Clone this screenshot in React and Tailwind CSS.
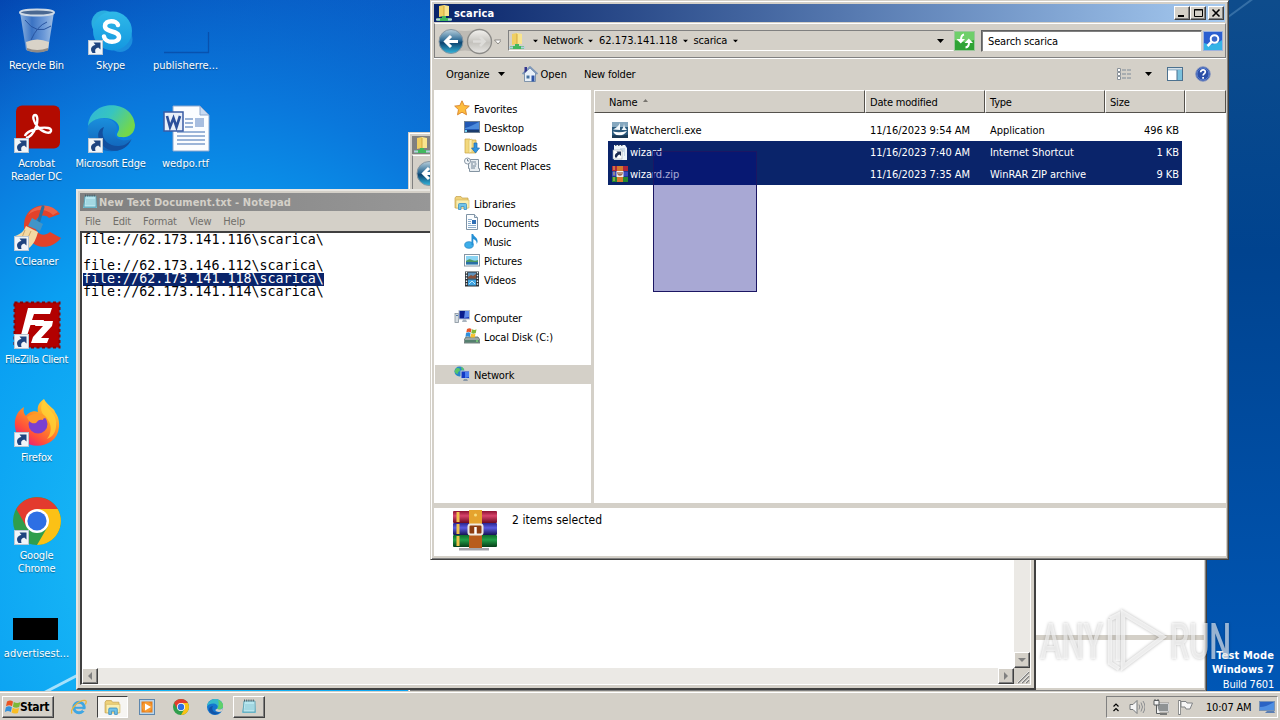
import React from "react";

const sideGroups = [
  {
    title: "Favorites",
    icon: "star",
    items: [
      { name: "Desktop", icon: "desktop" },
      { name: "Downloads", icon: "downloads" },
      { name: "Recent Places", icon: "recent" },
    ],
  },
  {
    title: "Libraries",
    icon: "library",
    items: [
      { name: "Documents", icon: "document" },
      { name: "Music", icon: "music" },
      { name: "Pictures", icon: "picture" },
      { name: "Videos", icon: "video" },
    ],
  },
  {
    title: "Computer",
    icon: "computer",
    items: [{ name: "Local Disk (C:)", icon: "disk" }],
  },
  { title: "Network", icon: "network", items: [], active: true },
];

const files = [
  { name: "Watchercli.exe", icon: "exe", date: "11/16/2023 9:54 AM", type: "Application", size: "496 KB" },
  { name: "wizard", icon: "link", date: "11/16/2023 7:40 AM", type: "Internet Shortcut", size: "1 KB", selected: true },
  { name: "wizard.zip", icon: "rar", date: "11/16/2023 7:35 AM", type: "WinRAR ZIP archive", size: "9 KB", selected: true },
];

const noteLines = [
  { text: "file://62.173.141.116\\scarica\\" },
  { text: "" },
  { text: "file://62.173.146.112\\scarica\\" },
  { text: "file://62.173.141.118\\scarica\\", selected: true },
  { text: "file://62.173.141.114\\scarica\\" },
];

const raised =
  "border border-t-white border-l-white border-r-[#404040] border-b-[#404040] shadow-[inset_-1px_-1px_0_#808080]";

/* ---------- small 16px icons ---------- */

const smallIcons = {
  star: (
    <path d="M8 .8l2.200 4.700 5.100.6-3.800 3.500 1 5.200L8 12.200l-4.500 2.600 1-5.200L.7 6.100l5.100-.6z" fill="#fdbd3e" stroke="#d8822a" strokeWidth=".9" />
  ),
  desktop: (
    <>
      <rect x=".5" y="2.500" width="15" height="11" fill="#2259b5" stroke="#6f8296" />
      <path d="M1 9c5-1 9-4 14-6v7H1z" fill="#4b8bdc" />
      <path d="M1 11h14v2H1z" fill="#1b3c6d" />
      <path d="M1 11h2v2H1z" fill="#6fd0f5" />
    </>
  ),
  showDesktop: (
    <>
      <rect x=".5" y="2.500" width="15" height="9" fill="#2a63c4" stroke="#7892b4" />
      <path d="M1 8c5 0 9-2 14-5v8H1z" fill="#4f8fe2" />
      <path d="M8 12h7l1 2H6z" fill="#5b7fb4" />
    </>
  ),
  downloads: (
    <>
      <path d="M1 1h5l1 1h5v13H1z" fill="#f3d97e" stroke="#c9a343" strokeWidth=".7" />
      <path d="M5 2l3-1v13l-3 1z" fill="#fbf0b5" stroke="#d3b558" strokeWidth=".5" />
      <path d="M10 5h3v5h2.500l-4 5-4-5H10z" fill="#2f94e0" stroke="#1e6bb0" strokeWidth=".7" />
    </>
  ),
  recent: (
    <>
      <path d="M4.500 2.500h10v9h1v3h-10v-3h-1z" fill="#e9eef2" stroke="#8494a2" />
      <path d="M7 5h5M7 7h2M10.500 7h2M7 9h5M7 11h4" stroke="#6e8294" />
      <circle cx="3.500" cy="4" r="3" fill="#f4f8fb" stroke="#8b98a6" />
      <path d="M3.500 2v2h1.500" stroke="#53687c" fill="none" strokeWidth=".8" />
    </>
  ),
  library: (
    <>
      <path d="M1 3l1-1.500h5l1 1.500h6v10H1z" fill="#efd27a" stroke="#c4a14b" strokeWidth=".7" />
      <path d="M2 5h13v8H2z" fill="#faeeb0" stroke="#d2b45a" strokeWidth=".6" />
      <path d="M4.500 14.500V9.500q0-1 1-1h6q1 0 1 1v5h-2.500v-3h-3v3z" fill="#70c3ea" stroke="#3b8fc0" strokeWidth=".8" />
    </>
  ),
  document: (
    <>
      <path d="M2.500.5h8l3 3v12h-11z" fill="#fbfdff" stroke="#7f93a5" />
      <path d="M10.500.5v3h3" fill="#dce8f2" stroke="#7f93a5" />
      <path d="M4 5.500h4M4 7.500h3M4 9.500h3M4 11.500h8M4 13.500h8" stroke="#8badcb" />
      <rect x="8" y="6" width="4" height="4" fill="#2f6fb4" />
    </>
  ),
  music: (
    <>
      <ellipse cx="5" cy="12" rx="4.300" ry="3.300" fill="#3daee9" stroke="#1f7fc0" strokeWidth=".7" />
      <path d="M7.500 1h1.700c.4 2.600 4.600 3.400 4.400 7.600-.1 1-.6 2-1 2.400.4-3-1.300-4-3.300-5V12H7.500z" fill="#2590d5" />
    </>
  ),
  picture: (
    <>
      <rect x=".5" y="2.500" width="15" height="11.500" fill="#fff" stroke="#8796a4" />
      <rect x="2" y="4" width="12" height="8.500" fill="#8ad4f3" />
      <path d="M2 9c3-2 4-2 6-1s4 1 6 0v2H2z" fill="#4f9963" />
      <path d="M2 10h12v2.500H2z" fill="#2a6fa6" />
    </>
  ),
  video: (
    <>
      <rect x="1" y=".5" width="14" height="15" fill="#2b3137" />
      <path d="M2.500 1v14M13.500 1v14" stroke="#eef3f6" strokeWidth="1.400" strokeDasharray="1.500 1.300" />
      <rect x="4" y="1.500" width="8" height="6" fill="#5f93bd" />
      <path d="M4 6l3-2 2 1 3-2v4.500H4z" fill="#8a5038" />
      <rect x="4" y="8.500" width="8" height="6" fill="#3fa4e2" />
      <path d="M5 13l3-3 3 3" stroke="#bfe5f8" fill="none" />
    </>
  ),
  computer: (
    <>
      <rect x="1" y="4.500" width="3.500" height="9" fill="#d5dce2" stroke="#85919c" strokeWidth=".8" />
      <path d="M2 6.500h2" stroke="#4b77a5" />
      <rect x="5" y="1.500" width="10.500" height="8.500" fill="#1533b5" stroke="#b4bfca" />
      <path d="M6 2h5v7H6z" fill="#0a1e8d" />
      <path d="M11 2h4v6l-5 1z" fill="#5e8bea" />
      <path d="M9 10.500h3l1 2.500H8z" fill="#a9b4bf" />
    </>
  ),
  disk: (
    <>
      <path d="M2 9h12l2 3v3H0v-3z" fill="#9aa7a5" stroke="#596866" strokeWidth=".8" />
      <path d="M1 12h14v2.500H1z" fill="#55806f" />
      <path d="M12 13h2" stroke="#8fff7a" />
      <path d="M3 1c2-1 3-1 4.500 0L6.800 4.500C5 3.500 4 3.500 2.300 4.500z" fill="#e8552a" />
      <path d="M8 1.200c2 1 3 1 4.500 0L11.800 5c-2 1-3 .7-4.500 0z" fill="#83b936" />
      <path d="M2 5c2-1 3-1 4.500 0L6 9C4 8 3 8 1.500 9z" fill="#2f8fdb" />
      <path d="M7 5.400c2 1 3 1 4.500 0L10.800 9.500H6.500z" fill="#f8c12e" />
    </>
  ),
  network: (
    <>
      <circle cx="5.500" cy="5.500" r="5" fill="#2686c9" />
      <path d="M2 2.500c3-1 4 0 4 1.500S3 6 4 8c-2 0-3-1-3.500-3zM7 1c2 0 3 2 3 3L8 5z" fill="#56c56a" />
      <rect x="7" y="5" width="8.500" height="7.500" fill="#1338c4" stroke="#c3ccd6" />
      <path d="M11 6h4v5l-4 1z" fill="#4c7df0" />
      <path d="M10 13h3l1 2H9z" fill="#8998a8" />
    </>
  ),
  exe: (
    <>
      <rect width="16" height="16" fill="#2d5b7d" />
      <path d="M0 0h16v5H0z" fill="#86a8bf" />
      <path d="M8 1C7 4 4 6 1 7.500l7 .5zM12 1c0 3-1 5-2.500 7H15c-2-2-3-4-3-7z" fill="#f2f8fb" />
      <path d="M1 9.500c4 1 9 1 14-.5-2 3-5 4.500-8 4.500s-5-2-6-4z" fill="#fff" />
      <path d="M0 13.500c4-1 9 1 16-1V16H0z" fill="#1b3954" />
    </>
  ),
  link: (
    <>
      <path d="M2 1h11l2 3v12H2z" fill="#eef4fa" />
      <path d="M3 1.500h9" stroke="#53606c" strokeDasharray="1.500 1.500" />
      <path d="M8 5h5M10 7h3M12 9h1M12 11h1" stroke="#a8bfd4" />
      <rect x="1" y="6" width="9" height="9" fill="#fff" stroke="#9aa5b0" strokeWidth=".6" />
      <path d="M3 13.500c-.5-3 .5-4.500 2.500-4.800L4.500 7.500H9V12L7.500 10.500C6 11 5.200 12 5 13.500z" fill="#1c2c50" />
    </>
  ),
  rar: (
    <>
      <rect width="16" height="5" fill="#b0263a" />
      <rect y="5.500" width="16" height="5" fill="#3a4bc0" />
      <rect y="11" width="16" height="5" fill="#26892f" />
      <path d="M2 0v16" stroke="#e7c25a" strokeDasharray="4 1.500" />
      <rect x="5" width="6" height="16" fill="#d8792c" />
      <rect x="4.500" y="5" width="7" height="6" fill="#eee" />
      <path d="M6 6v2q0 1 1 1h2q1 0 1-1V6M8 6v3" stroke="#813b1b" fill="none" />
    </>
  ),
  folderNet: (
    <>
      <path d="M3 1l5-1v11l-5 1z" fill="#f0cf62" />
      <path d="M8 0l5 1v10H8z" fill="#f9e58e" />
      <path d="M8 1v10" stroke="#c99c35" strokeWidth=".8" />
      <path d="M6 11h4v2h5v3H1v-3h5z" fill="#42b85e" />
      <path d="M0 13.500h4v2H0zM12 13.500h4v2h-4z" fill="#b6cfe0" />
    </>
  ),
  notepad: (
    <>
      <path d="M3 2h11l1 12H1z" fill="#76c3d6" />
      <path d="M3 2h11v11H2z" fill="#b7e6ef" stroke="#4d93a7" strokeWidth=".7" />
      <path d="M4 6h9M4 8h9M3.500 10H13" stroke="#7fbccb" strokeWidth=".7" />
      <path d="M3 1.500h11" stroke="#4b5f68" strokeWidth="2" strokeDasharray="1 1.200" />
    </>
  ),
  openHouse: (
    <>
      <path d="M2.500 7v8.500h11V7L8 2z" fill="#e8f0f8" stroke="#68829e" strokeWidth=".8" />
      <path d="M.5 8L8 1l7.500 7" stroke="#7f98b9" strokeWidth="1.800" fill="none" />
      <path d="M2.500 1h2.500v3.500L2.500 7z" fill="#34358f" />
      <path d="M9.500 9.500h3v6h-3z" fill="#2e55a6" />
      <path d="M4.500 9.500h3v3h-3z" fill="#46729f" />
    </>
  ),
  views: (
    <>
      <path d="M1.500 2.500h3v3h-3zM1.500 6.500h3v3h-3zM1.500 10.500h3v3h-3z" fill="#fff" stroke="#8a929a" />
      <path d="M6 4h4M11 4h4M6 8h4M11 8h4M6 12h4M11 12h4" stroke="#7c8a98" />
    </>
  ),
  pane: (
    <>
      <rect x=".5" y="1.500" width="15" height="13" fill="#fff" stroke="#4c718f" />
      <path d="M1 3.500h14" stroke="#a6bfd1" strokeWidth="2" />
      <rect x="10" y="4" width="5" height="10" fill="#7bc1dc" />
      <path d="M10 4v10" stroke="#4c718f" />
    </>
  ),
  help: (
    <>
      <circle cx="8" cy="8" r="7.300" fill="#2c4fa8" stroke="#8c9ac0" />
      <circle cx="8" cy="8" r="6" fill="none" stroke="#6b8fdb" strokeWidth=".8" />
      <path d="M5.700 6.200C5.700 3 10.500 3.200 10.300 6c-.1 1.700-2.200 1.700-2.200 3.600M8.100 11v1.700" stroke="#fff" strokeWidth="1.700" fill="none" />
    </>
  ),
  ie: (
    <>
      <circle cx="8" cy="8.500" r="5.200" fill="none" stroke="#3ea6e3" strokeWidth="3" />
      <path d="M4 8.800h9" stroke="#3ea6e3" strokeWidth="2" />
      <path d="M11 10.200h5v1.800h-4z" fill="#d4d0c8" />
      <path d="M1 14.500C-1.500 11 7 1 14 1.300c2 .3 1.200 2.700.3 4.200" fill="none" stroke="#e9b53c" strokeWidth="1.300" />
    </>
  ),
  wmp: (
    <>
      <rect x=".5" y=".5" width="15" height="15" fill="#b9d5ec" stroke="#5d86ad" />
      <rect x="2.500" y="2.500" width="11" height="11" fill="#e8801c" />
      <circle cx="8" cy="8" r="5" fill="#f79a31" />
      <path d="M6 4.500l6 3.500-6 3.500z" fill="#fff" />
    </>
  ),
  chrome: (
    <>
      <circle cx="8" cy="8" r="8" fill="#2f9e4c" />
      <path d="M1.100 4A8 8 0 0 1 14.900 4H8L4.500 10z" fill="#e33b2e" />
      <path d="M14.900 4A8 8 0 0 1 8 16l3.500-6L8 4z" fill="#fbc116" />
      <circle cx="8" cy="8" r="4" fill="#fff" />
      <circle cx="8" cy="8" r="3.200" fill="#2d6fe4" />
    </>
  ),
  edge: (
    <>
      <circle cx="8" cy="8" r="8" fill="#1476cf" />
      <path d="M0 7.500C.6-1.500 15.500-3 16 7c.1 3.500-4.200 4-6 2.800C12 7 9.500 4.500 6.500 4.500 3.500 4.500 1 5.500 0 7.500z" fill="#35b9cb" />
      <path d="M11 1c4 1 5.500 4 5 7-.6 2.500-4.500 3-6 1.800C12 8 12 3 11 1z" fill="#5fd06b" />
      <path d="M6 7c-2.500 4 1.500 8 7 6-3 4-10 3-11-2C1.600 8.500 4 7 6 7z" fill="#1254a8" />
      <path d="M10 9.800c1.800 1.200 4 .9 6-.8l-.8 3c-2 1.500-6 1.300-7-1z" fill="#d4d0c8" />
    </>
  ),
  speaker: (
    <>
      <path d="M1 5.500h3L8 1.500v13l-4-4H1z" fill="#f5f5f5" stroke="#75787a" />
      <path d="M10 5.500q1.500 2.500 0 5M12 3.500q3 4.500 0 9M14 2q4 6 0 12" stroke="#8a8d90" fill="none" />
    </>
  ),
  netTray: (
    <>
      <rect x="4.500" y="4.500" width="11" height="8" fill="#8f9394" stroke="#fff" />
      <rect x="4" y="4" width="12" height="9" fill="none" stroke="#66696b" strokeWidth=".6" />
      <path d="M1 1.500h5v4.500H1zM2 0v2M5 0v2M3.500 6v8.500H7" fill="#f4f4f4" stroke="#595c5e" />
      <path d="M7 15h7" stroke="#595c5e" strokeWidth="1.500" />
    </>
  ),
  flag: (
    <>
      <path d="M2.500 1v15" stroke="#76797b" strokeWidth="2.400" />
      <path d="M2.500 2v13" stroke="#fff" />
      <path d="M4 2.500h5l1 1.500h5.500l-2.500 6H9l-1-2H4z" fill="#f6f6f6" stroke="#808385" />
    </>
  ),
};

const Icon = ({ name, className = "h-4 w-4" }) => (
  <svg viewBox="0 0 16 16" className={`shrink-0 ${className}`}>
    {smallIcons[name]}
  </svg>
);

const Caret = ({ className = "" }) => (
  <svg viewBox="0 0 7 4" className={`h-1 w-[7px] shrink-0 ${className}`}>
    <path d="M0 0h7L3.500 4z" fill="#000" />
  </svg>
);

const WindowsFlag = ({ className }) => (
  <svg viewBox="0 0 16 16" className={className}>
    <path d="M2 2.500c2.500-1.500 4-1.200 6 0L7 7.200c-2-1.200-3.500-1.200-6 0z" fill="#ea5422" />
    <path d="M8.800 3c2.500 1.300 4.200 1.200 6.700 0l-1.300 5c-2.500 1-4 1-6.300-.3z" fill="#7cb837" />
    <path d="M.9 8.200c2.500-1.500 4-1.200 6 0L5.800 13c-2-1.200-3.700-1.200-6 0z" fill="#3391db" />
    <path d="M7.700 8.700c2.500 1.300 4 1.200 6.400.2l-1.200 5c-2.500 1-4 1-6.300-.3z" fill="#f9bd24" />
  </svg>
);

/* ---------- desktop icons ---------- */

const RecycleBin = () => (
  <svg viewBox="0 0 48 48" className="h-12 w-12">
    <defs>
      <linearGradient id="bin" x1="0" x2="1">
        <stop offset="0" stopColor="#a6c4e6" />
        <stop offset=".35" stopColor="#4478c4" />
        <stop offset=".7" stopColor="#7da4dc" />
        <stop offset="1" stopColor="#bdd2ea" />
      </linearGradient>
    </defs>
    <path d="M7 5l6 38q10 5 22 0l6-38z" fill="url(#bin)" opacity=".85" />
    <path d="M13 35l1 8q9 4 21 0l1-8q-12-5-23 0z" fill="#d9d3c8" />
    <path d="M14 41q10 4 21 0v2.500q-10 4-21 0z" fill="#918b85" />
    <path d="M12 13q12 16 26 6M34 15q-10 4-16 18" stroke="#2854a0" fill="none" />
    <ellipse cx="24" cy="5.500" rx="17" ry="3" fill="#4a6891" stroke="#ced9e5" strokeWidth="2" />
  </svg>
);

const Skype = () => (
  <svg viewBox="0 0 48 48" className="h-12 w-12">
    <defs>
      <linearGradient id="sk" x1="0" y1="0" x2="0" y2="1">
        <stop offset="0" stopColor="#2fb9e8" />
        <stop offset="1" stopColor="#1497e0" />
      </linearGradient>
    </defs>
    <circle cx="17" cy="16" r="12.500" fill="#2aaee0" />
    <circle cx="33" cy="32.500" r="12.500" fill="#1b8edd" />
    <circle cx="25.500" cy="24" r="19.500" fill="url(#sk)" />
    <path d="M31 18c-1-5-13-5.500-13 1 0 7 14 4 14 11 0 6.500-14 6.500-15-.5" stroke="#fff" strokeWidth="4.500" strokeLinecap="round" fill="none" />
  </svg>
);

const GhostFile = () => (
  <svg viewBox="0 0 48 48" className="h-12 w-12">
    <path d="M2 45.500h45M46.500 25v21" stroke="#073c91" strokeWidth="1.300" fill="none" opacity=".55" />
  </svg>
);

const Acrobat = () => (
  <svg viewBox="0 0 48 48" className="h-12 w-12">
    <rect x="3" y=".5" width="44" height="43" rx="6" fill="#b30b00" />
    <path d="M13 33c5-1 8-6 10-11 2-5 2-12-1-12s-2 7 3 12c5 6 12 7 13 4s-5-4-11-3-14 4-15 8" fill="none" stroke="#fff" strokeWidth="2.400" />
  </svg>
);

const Edge = () => (
  <svg viewBox="0 0 48 48" className="h-12 w-12">
    <defs>
      <linearGradient id="eg" x1="0" y1="0" x2="1" y2=".5">
        <stop offset="0" stopColor="#2fb4dc" />
        <stop offset=".5" stopColor="#37c5c0" />
        <stop offset="1" stopColor="#73d74c" />
      </linearGradient>
      <linearGradient id="eb" x1="0" y1="0" x2="0" y2="1">
        <stop offset="0" stopColor="#1b8fdc" />
        <stop offset="1" stopColor="#1061b8" />
      </linearGradient>
    </defs>
    <path d="M1 22C4 10 30 10 30 24c-4 4-2 10 5 11 5 1 9-1 10-1-7 15-33 18-42-1-2-4-3-8-2-11z" fill="url(#eb)" />
    <path d="M1 21C3-7 46-6 48 20c0 9-7 13-14 12-4 0-5-2-3-5 4-7-3-14-14-14-8 0-14 4-16 8z" fill="url(#eg)" />
    <path d="M17 22c-5 10 4 20 15 19 5 0 9-3 12-6-5 12-20 14-28 6-8-9-5-17 1-19z" fill="#124f9f" />
  </svg>
);

const WordDoc = () => (
  <svg viewBox="0 0 48 48" className="h-12 w-12">
    <path d="M11 1h27l9 9v36H11z" fill="#fbfdff" stroke="#8ea8cd" />
    <path d="M38 1v9h9z" fill="#c9daf1" stroke="#8ea8cd" />
    <path d="M23 14h8M23 18h8M23 22h8M15 27h28M15 31h28M15 35h28M15 39h28" stroke="#7d9dcc" strokeWidth="1.300" />
    <rect x="33" y="13" width="9" height="9" fill="#a8bedf" />
    <rect x="2" y="7" width="19" height="19" fill="#e9eff9" stroke="#395ba4" strokeWidth="1.500" />
    <path d="M5 11l3 11 3.500-9 3 9 3.500-11" stroke="#2c4f9b" strokeWidth="2.600" fill="none" />
  </svg>
);

const CCleaner = () => (
  <svg viewBox="0 0 48 48" className="h-12 w-12">
    <path d="M47 11C35-4 12 2 11 21c-1 20 22 32 37 14l-11-6c-7 6-15 1-15-7 0-9 9-12 14-7z" fill="#e2422a" />
    <path d="M15 12C20 2 36-1 45 9l-5 3C33 5 22 6 15 12z" fill="#f07358" opacity=".7" />
    <path d="M30 4l-5 17" stroke="#2a6f9f" strokeWidth="3" strokeLinecap="round" />
    <path d="M19 15l11 6-3 7-12-5z" fill="#4195c8" />
    <path d="M13 23l12 6c-2 7-4 12-9 16L2 33c6-2 9-5 11-10z" fill="#f3d9a4" />
    <path d="M12 27L8 37M18 28l-5 11" stroke="#cda56a" />
  </svg>
);

const FileZilla = () => (
  <svg viewBox="0 0 48 48" className="h-12 w-12">
    <rect x="1.500" y="1.500" width="45" height="45" fill="#b20000" stroke="#8c0000" strokeWidth="2" strokeDasharray="3 2.500" />
    <path d="M15 7h24l-2 6H21l-2 6h12l-1.500 5H17.500L13 38H7z" fill="#fff" />
    <path d="M24 20h16l-1 5-11 12h8l-2 5H18l2-6 10-11h-8z" fill="#fff" />
  </svg>
);

const Firefox = () => (
  <svg viewBox="0 0 48 48" className="h-12 w-12">
    <defs>
      <linearGradient id="ff" x1=".9" y1="0" x2=".2" y2="1">
        <stop offset="0" stopColor="#ffe74a" />
        <stop offset=".4" stopColor="#ff9a23" />
        <stop offset=".75" stopColor="#ff4d3c" />
        <stop offset="1" stopColor="#e31587" />
      </linearGradient>
    </defs>
    <path d="M31 0c-6 4-7 9-6 13-5-2-10 1-12 4-2-2-3-5-2-9C4 12 1 20 2 28c3 25 42 25 44 0 .5-7-1-11-4-15 0-3-8-7-11-13z" fill="url(#ff)" />
    <circle cx="25" cy="25" r="9.500" fill="#7a3fd0" />
    <path d="M14 18c7-5 17-5 22 2-4-2-6-1-6 1-3-1-5 0-7 3-5 1-7-1-9-6z" fill="#ff9a2a" />
    <path d="M31 1c2 10 14 12 12 27-1 8-5 10-9 12 7-9 3-18-2-23-5-4-5-10-1-16z" fill="#ffd236" opacity=".8" />
  </svg>
);

const Chrome = () => (
  <svg viewBox="0 0 16 16" className="h-12 w-12">
    {smallIcons.chrome}
  </svg>
);

const BlackFile = () => (
  <div className="flex h-12 w-12 items-end pb-[3px]">
    <div className="h-[22px] w-[45px] bg-black" />
  </div>
);

const desktopIcons = [
  { label: ["Recycle Bin"], Art: RecycleBin },
  { label: ["Acrobat", "Reader DC"], Art: Acrobat, shortcut: true },
  { label: ["CCleaner"], Art: CCleaner, shortcut: true },
  { label: ["FileZilla Client"], Art: FileZilla, shortcut: true, spacing: "tracking-[-0.4px]" },
  { label: ["Firefox"], Art: Firefox, shortcut: true },
  { label: ["Google", "Chrome"], Art: Chrome, shortcut: true },
  { label: ["advertisest..."], Art: BlackFile, spacing: "tracking-[0.05px]" },
  { label: ["Skype"], Art: Skype, shortcut: true },
  { label: ["Microsoft Edge"], Art: Edge, shortcut: true },
];

const moreIcons = [
  { label: ["publisherre..."], Art: GhostFile, spacing: "tracking-normal" },
  { label: ["wedpo.rtf"], Art: WordDoc, spacing: "tracking-normal" },
];

const DesktopIcon = ({ label, Art, shortcut, spacing = "" }) => (
  <div className="flex h-[98px] flex-col items-center pt-[7px]">
    <div className="relative h-12 w-12">
      <Art />
      {shortcut && (
        <svg viewBox="0 0 15 15" className="absolute bottom-0 left-px h-[15px] w-[15px]">
          <rect x=".5" y=".5" width="14" height="14" fill="#f1f5f9" stroke="#b9c6d4" />
          <path d="M4.500 13C1.500 9 3.500 5.500 7.500 5L5.500 2.500h7V9.500L10.200 7.500C7.500 8 6.500 10 7.500 13z" fill="#1f447f" />
        </svg>
      )}
    </div>
    <div
      className={`mt-1 text-center leading-[13px] whitespace-nowrap text-white [text-shadow:0_1px_1px_#0006] ${spacing}`}
    >
      {label.map((line) => (
        <div key={line}>{line}</div>
      ))}
    </div>
  </div>
);

/* ---------- explorer ---------- */

const NavButtons = () => (
  <svg viewBox="0 0 66 30" className="h-[30px] w-[66px] shrink-0">
    <defs>
      <linearGradient id="back" x1="0" y1="0" x2="0" y2="1">
        <stop offset="0" stopColor="#b8cfdc" />
        <stop offset=".45" stopColor="#2f6c96" />
        <stop offset=".55" stopColor="#0d4470" />
        <stop offset="1" stopColor="#35b6dc" />
      </linearGradient>
      <linearGradient id="fwd" x1="0" y1="0" x2="0" y2="1">
        <stop offset="0" stopColor="#f3f2ef" />
        <stop offset=".55" stopColor="#c4c2bd" />
        <stop offset="1" stopColor="#e8e7e4" />
      </linearGradient>
    </defs>
    <path d="M16 3q14 4 28 0v24q-14-5-28 0z" fill="#bdbab4" />
    <circle cx="16" cy="15.500" r="12" fill="url(#back)" stroke="#8796a1" />
    <path d="M23 15.500H11M16 10L10.500 15.500l5.500 5.500" stroke="#fff" strokeWidth="3" fill="none" />
    <circle cx="44.500" cy="15.500" r="12" fill="url(#fwd)" stroke="#8b8a87" strokeWidth="1.300" />
    <path d="M38 15.500h11M45 11l4.500 4.500-4.500 4.500" stroke="#dddcd9" strokeWidth="2.500" fill="none" />
    <path d="M59.500 14h7l-3.500 4z" fill="#fff" stroke="#77756f" strokeWidth=".8" />
  </svg>
);

const WinButton = ({ children }) => (
  <div className={`flex h-3.5 w-4 items-center justify-center bg-[#d4d0c8] ${raised}`}>
    <svg viewBox="0 0 12 10" className="h-2.5 w-3">
      {children}
    </svg>
  </div>
);

const Crumb = ({ children }) => (
  <>
    <Caret className="mx-[4.500px] scale-75" />
    <span>{children}</span>
  </>
);

const SideItem = ({ icon, name, nested, active }) => (
  <div
    className={`ml-px flex h-[19px] items-center gap-1 tracking-[-0.15px] ${nested ? "pl-[29px]" : "pl-[19px]"} ${active ? "bg-[#d4d0c8]" : ""}`}
  >
    <Icon name={icon} className="mb-0.5 h-4 w-4" />
    <span className="pt-0.5">{name}</span>
  </div>
);

const HeaderCell = ({ children, className }) => (
  <div
    className={`flex items-center border-t border-r border-b border-l border-t-white border-r-[#55524d] border-b-[#55524d] border-l-white bg-[#d4d0c8] pt-px ${className}`}
  >
    {children}
  </div>
);

const columns = "grid grid-cols-[258px_120px_120px_76px]";

const Explorer = ({ active, className }) => (
  <div
    className={`absolute flex h-[560px] w-[799px] flex-col border border-t-[#d4d0c8] border-r-[#404040] border-b-[#404040] border-l-[#d4d0c8] bg-[#d4d0c8] shadow-[inset_1px_1px_0_#fff,inset_-1px_-1px_0_#808080] ${className}`}
  >
    <div
      className={`mx-[3px] mt-[3px] flex h-[18px] shrink-0 items-center pl-0.5 font-bold text-white ${active ? "bg-linear-to-r from-[#0a246a] to-[#a6caf0]" : "bg-linear-to-r from-[#808080] to-[#c0c0c0]"}`}
    >
      <Icon name="folderNet" />
      <span className="ml-0.5 tracking-[0.15px]">{active && "scarica"}</span>
      {active && (
        <div className="mr-px ml-auto flex">
          <WinButton>
            <path d="M2 8h6" stroke="#000" strokeWidth="2" />
          </WinButton>
          <WinButton>
            <path d="M2.500 1.500h8v7h-8zM2 2h9" stroke="#000" fill="none" />
          </WinButton>
          <div className="ml-0.5">
            <WinButton>
              <path d="M2.500 1.500l7 7M9.500 1.500l-7 7" stroke="#000" strokeWidth="1.600" />
            </WinButton>
          </div>
        </div>
      )}
    </div>

    {/* address bar */}
    <div className="mr-0.5 ml-[3px] mt-px flex h-[35px] shrink-0 items-center border border-t-white border-r-[#808080] border-b-[#808080] border-l-[#808080] pr-0.5 shadow-[0_1px_0_#fff]">
      <NavButtons />
      <div className="ml-[7px] flex h-[21px] flex-1 items-center border border-t-[#808080] border-r-transparent border-b-white border-l-[#808080]">
        <Icon name="folderNet" />
        {active && (
          <>
            <div className="w-0.5" />
            <Crumb>Network</Crumb>
            <Crumb>
              <span className="tracking-normal">62.173.141.118</span>
            </Crumb>
            <Crumb>scarica</Crumb>
            <Caret className="ml-[5px] scale-75" />
            <Caret className="mr-[9px] ml-auto" />
          </>
        )}
      </div>
      <svg viewBox="0 0 21 20" className="h-5 w-[21px] shrink-0">
        <rect x=".5" y=".5" width="20" height="19" fill="#2fa335" stroke="#9cc79c" />
        <path d="M1 1h19v8q-10 4-19 0z" fill="#6fcf6a" />
        <path d="M10 3.500Q7 4 7 9" stroke="#fff" strokeWidth="2" fill="none" />
        <path d="M2.500 8h8.500L6.800 12.500z" fill="#fff" />
        <path d="M11.500 16.500q3.500-.5 3.500-5" stroke="#fff" strokeWidth="2" fill="none" />
        <path d="M10.500 12H19L14.800 7.500z" fill="#fff" />
      </svg>
      <div className="ml-1.5 flex h-[22px] w-[221px] items-center border border-t-[#606060] border-r-[#d4d0c8] border-b-[#d4d0c8] border-l-[#606060] bg-white pt-px pl-1.5 tracking-[-0.15px] shadow-[inset_1px_1px_0_#808080]">
        {active && "Search scarica"}
      </div>
      <svg viewBox="0 0 20 20" className="ml-px h-5 w-5 shrink-0">
        <rect x=".5" y=".5" width="19" height="19" fill="#2b5fd0" stroke="#9db2dd" />
        <path d="M1 12q9 4 18-3v10H1z" fill="#35b3e6" />
        <path d="M8.500 11L4.500 15" stroke="#fff" strokeWidth="2.500" />
        <circle cx="11.500" cy="8" r="3.800" fill="#3a68c8" stroke="#fff" strokeWidth="2" />
      </svg>
    </div>

    {/* command bar */}
    <div className="ml-[15px] flex h-8 shrink-0 items-center">
      <span className="tracking-[-0.1px]">Organize</span>
      <Caret className="ml-2" />
      <Icon name="openHouse" className="mr-[3px] ml-[17px] h-4 w-4" />
      <span className="tracking-normal">Open</span>
      <span className="ml-[17px]">New folder</span>
      <Icon name="views" className="ml-auto h-4 w-4" />
      <Caret className="ml-[13px]" />
      <Icon name="pane" className="ml-[15px] h-4 w-4" />
      <Icon name="help" className="mr-[17px] ml-3 h-4 w-4" />
    </div>

    <div className="mr-0.5 ml-[3px] flex h-[413px] shrink-0">
      <div className="w-[157px] bg-white pt-[9px]">
        {active &&
          sideGroups.map((group) => (
            <div key={group.title} className="mb-[19px]">
              <SideItem icon={group.icon} name={group.title} active={group.active} />
              {group.items.map((item) => (
                <SideItem key={item.name} {...item} nested />
              ))}
            </div>
          ))}
      </div>
      <div className="relative ml-[3px] flex-1 bg-white">
        <div className="flex h-[23px]">
          <HeaderCell className="w-[271px] pl-[14px]">
            Name
            <svg viewBox="0 0 5 3" className="mb-1 ml-1.5 h-[3px] w-[5px]">
              <path d="M0 3h5L2.500 0z" fill="#77746e" />
            </svg>
          </HeaderCell>
          <HeaderCell className="w-[120px] pl-1">Date modified</HeaderCell>
          <HeaderCell className="w-[120px] pl-1">Type</HeaderCell>
          <HeaderCell className="w-20 pl-1">Size</HeaderCell>
          <HeaderCell className="flex-1" />
        </div>
        {active && (
          <div className="mt-1.5 ml-[14px] w-[574px] tracking-[-0.05px]">
            {files.map((file) => (
              <div
                key={file.name}
                className={`h-[22px] items-center ${columns} ${file.selected ? "bg-[#0a246a] text-white" : ""}`}
              >
                <div className="flex items-center gap-0.5 pl-1">
                  <Icon name={file.icon} />
                  {file.name}
                </div>
                <div className="pl-1">{file.date}</div>
                <div className="pl-1">{file.type}</div>
                <div className="pr-[3px] text-right">{file.size}</div>
              </div>
            ))}
          </div>
        )}
        {/* drag selection */}
        {active && (
          <div className="absolute top-[61px] left-[59px] h-[141px] w-[104px] border border-[#1b1663] bg-[#000082]/34" />
        )}
      </div>
    </div>

    <div className="mt-[5px] mr-0.5 mb-[3px] ml-[3px] flex flex-1 bg-white pl-[18px]">
      {active && (
        <>
          <svg viewBox="0 0 46 42" className="mt-0.5 h-[42px] w-[46px]">
            <defs>
              <linearGradient id="r1" x1="0" y1="0" x2="0" y2="1">
                <stop offset="0" stopColor="#8d1230" />
                <stop offset=".4" stopColor="#d8446c" />
                <stop offset="1" stopColor="#6c0a20" />
              </linearGradient>
              <linearGradient id="r2" x1="0" y1="0" x2="0" y2="1">
                <stop offset="0" stopColor="#2a2590" />
                <stop offset=".4" stopColor="#5a5be0" />
                <stop offset="1" stopColor="#161455" />
              </linearGradient>
              <linearGradient id="r3" x1="0" y1="0" x2="0" y2="1">
                <stop offset="0" stopColor="#0e6b2b" />
                <stop offset=".4" stopColor="#21a048" />
                <stop offset="1" stopColor="#063d18" />
              </linearGradient>
            </defs>
            <path d="M7 38h30v2.500H7z" fill="#a5a5ab" />
            <rect x="1" y="1" width="44" height="12" rx="1" fill="url(#r1)" />
            <rect x="1" y="13" width="44" height="12" rx="1" fill="url(#r2)" />
            <rect x="1" y="25" width="44" height="12" rx="1" fill="url(#r3)" />
            <path d="M6 2v10M6 14v10M6 26v10" stroke="#f0c24a" strokeWidth="3" />
            <rect x="17" width="13" height="38" fill="#b85c1c" />
            <path d="M17 0h13v14H17z" fill="#e5a32e" />
            <rect x="16.500" y="14.500" width="14" height="10" rx="2" fill="#8d3d12" stroke="#efeae2" strokeWidth="2" />
            <path d="M23.500 17v7" stroke="#fff" strokeWidth="2.500" />
            <circle cx="23.500" cy="5" r="1.500" fill="#f8dd7b" />
          </svg>
          <span className="mt-1 ml-[14px] text-xs tracking-[0.05px]">2 items selected</span>
        </>
      )}
    </div>
  </div>
);

/* ---------- notepad ---------- */

const ScrollButton = ({ d }) => (
  <div className={`flex h-4 w-4 shrink-0 items-center justify-center bg-[#d4d0c8] ${raised}`}>
    <svg viewBox="0 0 8 8" className="h-2 w-2">
      <path d={d} fill="#808080" />
    </svg>
  </div>
);

const track = "bg-[#ebe9e5]";

const Notepad = () => (
  <div className="absolute top-[189px] left-[76px] flex h-[501px] w-[960px] flex-col border-2 border-t-[#e8e6e1] border-r-[#404040] border-b-[#404040] border-l-[#e8e6e1] bg-[#d4d0c8] pt-0.5 pr-[3px] pb-[3px] pl-0.5">
    <div className="flex h-[18px] shrink-0 items-center bg-linear-to-r from-[#808080] to-[#c0c0c0] pl-0.5 font-bold tracking-[0.1px] text-[#d4d0c8]">
      <Icon name="notepad" />
      <span className="ml-px">New Text Document.txt - Notepad</span>
    </div>
    <div className="flex h-[20px] shrink-0 items-center gap-3 pl-[5px] text-[#716f6a]">
      {["File", "Edit", "Format", "View", "Help"].map((item) => (
        <span key={item}>{item}</span>
      ))}
    </div>
    <div className="flex flex-1 flex-col border-t-2 border-r border-b border-l-2 border-t-[#404040] border-r-white border-b-white border-l-[#404040]">
      <div className="flex flex-1">
        <div className="flex-1 bg-white px-px pt-px">
          {noteLines.map((line, i) => (
            <div
              key={i}
              className="h-[13px] font-['DejaVu_Sans_Mono',monospace] text-[13.33px] leading-[12px] tracking-normal whitespace-pre"
            >
              <span className={line.selected ? "inline-block h-[13px] bg-[#0a246a] text-white" : ""}>{line.text}</span>
            </div>
          ))}
        </div>
        <div className={`flex w-4 flex-col justify-end ${track}`}>
          <ScrollButton d="M0 2h8L4 6z" />
        </div>
      </div>
      <div className="flex h-4">
        <ScrollButton d="M6 0v8L2 4z" />
        <div className={`flex-1 ${track}`} />
        <ScrollButton d="M2 0v8l4-4z" />
        <svg viewBox="0 0 16 16" className="h-4 w-4 bg-[#d4d0c8]">
          <path d="M4 15L15 4M8 15l7-7M12 15l3-3" stroke="#808080" strokeWidth="1.500" />
          <path d="M3 15L15 3M7 15l8-8M11 15l4-4" stroke="#fff" strokeWidth=".7" />
        </svg>
      </div>
    </div>
  </div>
);

/* ---------- taskbar ---------- */

const Taskbar = () => (
  <div className="absolute bottom-0 left-0 flex h-[29px] w-full items-center border-t border-[#d4d0c8] bg-[#d4d0c8] pt-0.5 shadow-[inset_0_1px_0_#fff]">
    <div className={`ml-0.5 flex h-[22px] w-[52px] items-center pl-0.5 text-xs font-bold ${raised}`}>
      <WindowsFlag className="h-4 w-4 shrink-0" />
      <span className="-ml-px tracking-tight">Start</span>
    </div>
    <Icon name="ie" className="ml-[17px] h-4 w-4" />
    <div className="ml-[10px] flex h-[22px] w-[31px] items-center justify-center border border-t-[#404040] border-r-white border-b-white border-l-[#404040] bg-[#f6f5f2]">
      <Icon name="library" className="h-[17px] w-[17px]" />
    </div>
    <Icon name="wmp" className="ml-[11px] h-4 w-4" />
    <Icon name="chrome" className="ml-[18px] h-4 w-4" />
    <Icon name="edge" className="ml-[18px] h-4 w-4" />
    <div className={`ml-[10px] flex h-[22px] w-8 items-center justify-center ${raised}`}>
      <Icon name="notepad" />
    </div>
    <div className="mr-0.5 ml-auto flex h-[22px] w-[172px] items-center border border-t-[#808080] border-r-white border-b-white border-l-[#808080] pl-1.5">
      <svg viewBox="0 0 6 9" className="h-[9px] w-1.5">
        <path d="M.5 3.500L3 1l2.500 2.500M.5 8L3 5.500 5.500 8" stroke="#000" strokeWidth="1.200" fill="none" />
      </svg>
      <Icon name="speaker" className="ml-[10px] h-4 w-4" />
      <Icon name="netTray" className="ml-2 h-4 w-4" />
      <Icon name="flag" className="ml-2 h-4 w-4" />
      <span className="ml-[13px] w-[47px] whitespace-nowrap">10:07 AM</span>
      <Icon name="showDesktop" className="ml-1.5 h-4 w-4" />
    </div>
  </div>
);

const Watermark = () => (
  <svg
    viewBox="0 0 200 70"
    className="absolute top-[605px] left-[1036px] h-[70px] w-[200px] overflow-visible [filter:drop-shadow(0_0_1.500px_#0006)]"
  >
    <g fill="#fff" fillOpacity=".6" fontFamily="Roboto, sans-serif" fontSize="50" fontWeight="500">
      <text x="4" y="54" textLength="63" lengthAdjust="spacingAndGlyphs">ANY</text>
      <text x="134" y="54" textLength="61" lengthAdjust="spacingAndGlyphs">RUN</text>
    </g>
    <path d="M87 8l40 24-40 30zM74 14v44l9 6M74 14l8-4v46" fill="none" stroke="#fff" strokeOpacity=".7" strokeWidth="4.500" />
  </svg>
);

// light rays of the wallpaper
const Rays = () => (
  <svg viewBox="0 0 1280 720" className="absolute top-0 left-0 h-[720px] w-[1280px]">
    <path d="M1224 20l30-22" stroke="#7fb0d8" strokeWidth="2" opacity=".35" />
    <path d="M30 700l50-26" stroke="#d8f4ff" strokeWidth="3" opacity=".75" />
  </svg>
);

const App = () => (
  <div className="relative h-[720px] w-[1280px] overflow-hidden bg-[#0757bd] bg-[radial-gradient(ellipse_520px_620px_at_200px_560px,#1fc4f8_0%,#0aa0f2_50%,#0a78dc_75%,transparent_100%),linear-gradient(90deg,transparent_0%,transparent_90%,#0a468a_95%,#0a468a_100%),linear-gradient(100deg,#0343ae_0%,#0a62cb_35%,#0c4a90_85%)] font-['DejaVu_Sans_Condensed','DejaVu_Sans',sans-serif] text-[11px] leading-[13px] tracking-[-0.2px] text-black select-none">
    <div className="absolute top-0 right-0 h-full w-20 bg-linear-to-b from-[#0e4c8c] via-[#00438f] via-35% to-[#0058b8]" />
    <Rays />
    <div className="relative flex">
      <div className="grid grid-flow-col grid-cols-[73px_75px] grid-rows-[repeat(7,98px)]">
        {desktopIcons.map((icon) => (
          <DesktopIcon key={icon.label[0]} {...icon} />
        ))}
      </div>
      <div className="w-[75px]">
        {moreIcons.map((icon) => (
          <DesktopIcon key={icon.label[0]} {...icon} />
        ))}
      </div>
    </div>

    <div className="absolute right-[6px] bottom-[28px] text-right leading-[14.500px] text-white">
      <p className="font-bold tracking-[0.15px]">Test Mode</p>
      <p className="font-bold tracking-[0.15px]">Windows 7</p>
      <p>Build 7601</p>
    </div>

    <Explorer className="top-[132px] left-[408px]" />
    <Notepad />
    <Explorer active className="top-0 left-[430px]" />
    <Watermark />
    <Taskbar />
  </div>
);

export default App;
